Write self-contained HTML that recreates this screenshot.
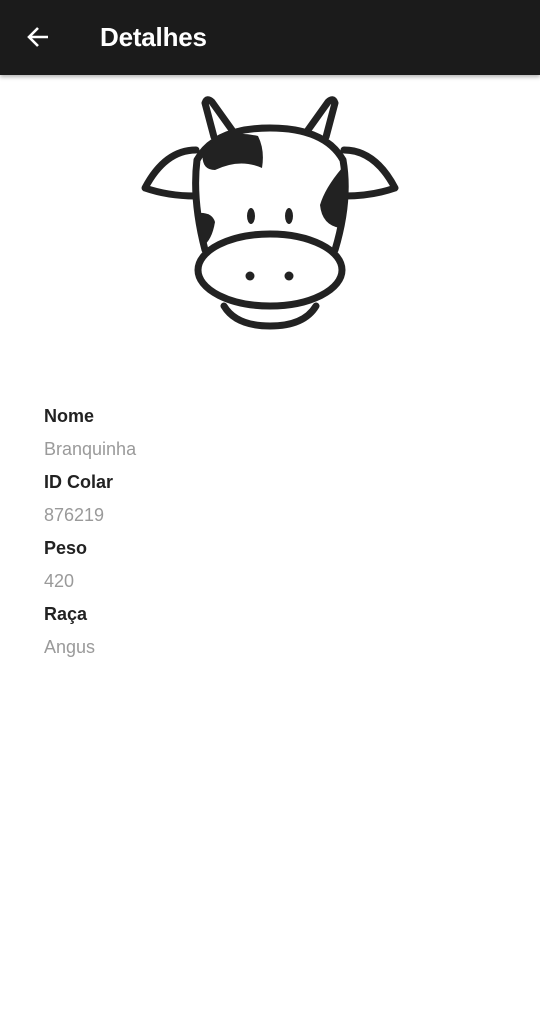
<!DOCTYPE html>
<html><head><meta charset="utf-8"><style>
body{margin:0;width:540px;height:1032px;background:#fff;font-family:"Liberation Sans",sans-serif;position:relative;overflow:hidden}
.bar{position:absolute;top:0;left:0;width:540px;height:75px;background:#1b1b1b;box-shadow:0 2px 4px rgba(0,0,0,.3)}
.title{position:absolute;left:100px;top:22px;color:#fff;font-size:26px;font-weight:bold;letter-spacing:-0.2px}
.t{position:absolute;left:44px;font-size:18px}
.l{font-weight:bold;color:#222}
.v{color:#9a9a9a}
</style></head><body>
<div class="bar">
<svg style="position:absolute;left:26px;top:25px" width="24" height="24" viewBox="0 0 24 24"><path d="M22 12H4M12 3L3 12l9 9" stroke="#fff" stroke-width="2.6" fill="none"/></svg>
<div class="title">Detalhes</div>
</div>
<svg style="position:absolute;left:0;top:0" width="540" height="340" viewBox="0 0 540 340">
<g stroke="#222" stroke-width="7" fill="none" stroke-linejoin="round" stroke-linecap="round">
<path d="M214 137 L205 103 Q207 97 212 102 L232 130"/>
<path d="M326 137 L335 103 Q333 97 328 102 L308 130"/>
<path d="M196 150 Q165 150 145 188 Q168 196 195 196"/>
<path d="M344 150 Q375 150 395 188 Q372 196 345 196"/>
<path d="M205 250 Q192 200 197 160 Q215 128 270 128 Q325 128 343 160 Q350 200 335 250"/>
<ellipse cx="270" cy="270" rx="72" ry="36" fill="#fff"/>
<path d="M224 306 Q236 326 270 326 Q304 326 316 306"/>
</g>
<g fill="#222">
<path d="M203 150 Q225 128 258 136 Q265 150 262 168 Q240 158 215 170 Q200 170 203 150Z"/>
<path d="M342 168 Q325 188 320 205 Q322 225 340 228 Q350 200 342 168Z"/>
<path d="M198 213 Q212 212 215 222 Q212 240 203 246 Q196 230 198 213Z"/>
<ellipse cx="251" cy="216" rx="4" ry="8"/><ellipse cx="289" cy="216" rx="4" ry="8"/>
<circle cx="250" cy="276" r="4.5"/><circle cx="289" cy="276" r="4.5"/>
</g>
</svg>
<div class="t l" style="top:406px">Nome</div>
<div class="t v" style="top:439px">Branquinha</div>
<div class="t l" style="top:472px">ID Colar</div>
<div class="t v" style="top:505px">876219</div>
<div class="t l" style="top:538px">Peso</div>
<div class="t v" style="top:571px">420</div>
<div class="t l" style="top:604px">Raça</div>
<div class="t v" style="top:637px">Angus</div>
</body></html>
